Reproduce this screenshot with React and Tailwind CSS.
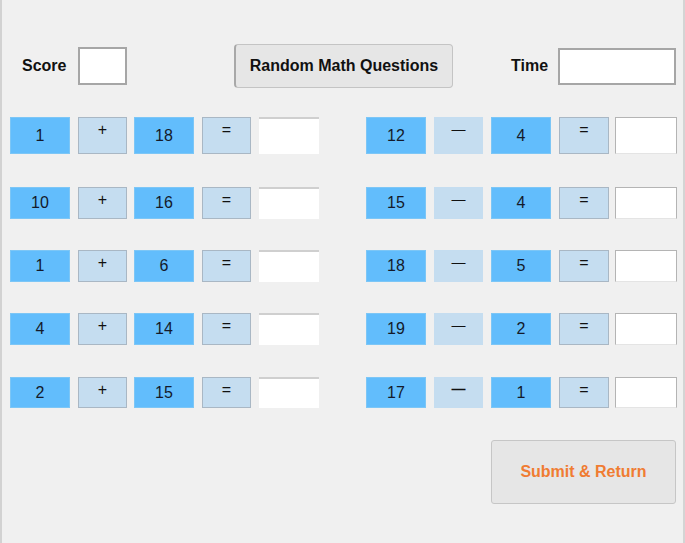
import React from 'react';

const addRows = [
  [1, 18],
  [10, 16],
  [1, 6],
  [4, 14],
  [2, 15],
];

const subRows = [
  [12, 4],
  [15, 4],
  [18, 5],
  [19, 2],
  [17, 1],
];

// row tops: 117, 187, 250, 313, 377
const rowStyles = [
  'mt-[29px] h-[37px]',
  'mt-[33px] h-[32px]',
  'mt-[31px] h-[32px]',
  'mt-[31px] h-[32px]',
  'mt-[32px] h-[31px]',
];

function NumBox({ value, w = 'w-[60px]', className = '' }) {
  return (
    <div className={`${w} ${className} h-full bg-[#62bdfc] border border-[#7cc6f6] flex items-center justify-center text-[16px] text-[#141a2a]`}>
      {value}
    </div>
  );
}

function OpBox({ children, w = 'w-[49px]', border = 'border-[#a9b7c4]', bold = false, className = '' }) {
  return (
    <div className={`${w} ${className} h-full bg-[#c5ddf0] border ${border} flex justify-center items-start pt-[4px] text-[16px] leading-none text-[#111] ${bold ? 'font-bold' : ''}`}>
      {children}
    </div>
  );
}

function AnswerBox({ w = 'w-[60px]', full = false, className = '' }) {
  return (
    <div className={`${w} ${className} h-full bg-white ${full ? 'border border-[#b4b4b4] border-b-[#e4e4e4]' : 'border-t-2 border-[#cfcfcf]'}`} />
  );
}

export default function App() {
  return (
    <div
      className="w-[685px] h-[543px] bg-[#f0f0f0] border-l-2 border-l-[#d2d2d2] border-r-2 border-r-[#d4d4d4] overflow-hidden"
      style={{ fontFamily: '"Liberation Sans", Arial, sans-serif' }}
    >
      {/* header */}
      <div className="flex items-center h-[44px] mt-[44px]">
        <span className="ml-[20px] w-[56px] text-[16px] font-bold text-[#111]">Score</span>
        <div className="w-[49px] h-[38px] bg-white border-2 border-[#a6a6a6]" />
        <button className="ml-[107px] w-[219px] h-[44px] bg-[#e6e6e6] border border-[#c4c4c4] border-l-2 border-l-[#a8a8a8] rounded-[4px] text-[16px] font-bold text-[#111]">
          Random Math Questions
        </button>
        <span className="ml-[58px] w-[47px] text-[16px] font-bold text-[#111]">Time</span>
        <div className="w-[118px] h-[37px] bg-white border-2 border-[#a6a6a6]" />
      </div>

      {/* question rows */}
      {addRows.map((a, i) => {
        const s = subRows[i];
        return (
          <div key={i} className={`flex ${rowStyles[i]}`}>
            <div className="ml-[8px] flex h-full">
              <NumBox value={a[0]} />
              <OpBox className="ml-[8px]">+</OpBox>
              <NumBox value={a[1]} className="ml-[7px]" />
              <OpBox className="ml-[8px]">=</OpBox>
              <AnswerBox className="ml-[8px]" />
            </div>
            <div className="ml-[47px] flex h-full">
              <NumBox value={s[0]} />
              <OpBox border="border-[#c5ddf0]" bold={i === 4} className="ml-[8px]">
                <span className="text-[14px] leading-none">—</span>
              </OpBox>
              <NumBox value={s[1]} className="ml-[8px]" />
              <OpBox w="w-[50px]" className="ml-[8px]">=</OpBox>
              <AnswerBox w="w-[62px]" full className="ml-[6px]" />
            </div>
          </div>
        );
      })}

      {/* submit */}
      <div className="flex justify-end mt-[32px] mr-[7px]">
        <button className="w-[185px] h-[64px] bg-[#e6e6e6] border border-[#c6c6c6] rounded-[3px] text-[16px] font-bold text-[#f07c32]">
          Submit &amp; Return
        </button>
      </div>
    </div>
  );
}
